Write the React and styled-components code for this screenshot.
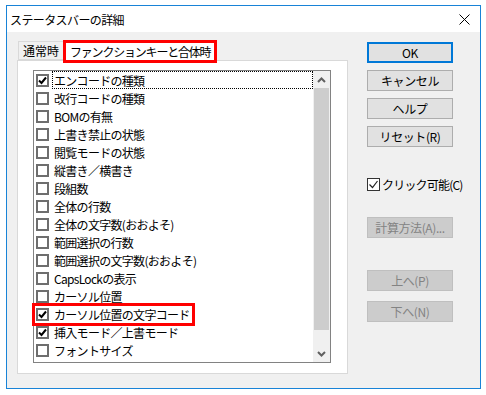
import React from "react";
import styled, { createGlobalStyle } from "styled-components";

const GlobalStyle = createGlobalStyle`
  html, body {
    margin: 0;
    padding: 0;
    background: #ffffff;
  }
  body {
    font-family: "Noto Sans CJK JP", "Noto Sans", sans-serif;
    font-size: 12px;
    color: #000000;
  }
`;

const Page = styled.div`
  padding: 5px 6px;
  width: 486px;
  height: 395px;
  box-sizing: border-box;
`;

const Window = styled.div`
  width: 475px;
  height: 384px;
  box-sizing: border-box;
  border: 1px solid #1883d7;
  display: flex;
  flex-direction: column;
  background: #f0f0f0;
`;

const TitleBar = styled.div`
  height: 26px;
  background: #ffffff;
  display: flex;
  align-items: center;
  justify-content: space-between;
  padding: 0 10px 0 3px;
  font-size: 12px;
  letter-spacing: -0.6px;
`;

const Content = styled.div`
  flex: 1;
  display: flex;
  padding: 6px 26px 0 10px;
  gap: 19px;
`;

const LeftColumn = styled.div`
  display: flex;
  flex-direction: column;
  width: 331px;
`;

const TabStrip = styled.div`
  height: 22px;
  display: flex;
  align-items: flex-end;
  padding-left: 1px;
`;

const Tab = styled.div`
  position: relative;
  height: ${(p) => (p.$active ? "21px" : "19px")};
  box-sizing: border-box;
  padding: 0 ${(p) => (p.$active ? "5px" : "4px")};
  border: 1px solid #d9d9d9;
  border-bottom: ${(p) => (p.$active ? "none" : "1px solid #d9d9d9")};
  background: ${(p) => (p.$active ? "#ffffff" : "#f0f0f0")};
  display: flex;
  align-items: center;
  margin-bottom: ${(p) => (p.$active ? "-1px" : "0")};
  z-index: ${(p) => (p.$active ? 2 : 1)};
  font-size: 12px;
  letter-spacing: ${(p) => (p.$active ? "-1.2px" : "0")};
`;

const RedMark = styled.div`
  position: absolute;
  left: ${(p) => p.$l}px;
  top: ${(p) => p.$t}px;
  right: ${(p) => p.$r}px;
  bottom: ${(p) => p.$b}px;
  border: 3px solid #ff0000;
  pointer-events: none;
  z-index: 5;
`;

const Panel = styled.div`
  flex: none;
  height: 314px;
  box-sizing: border-box;
  background: #ffffff;
  border: 1px solid #d9d9d9;
  padding: 9px 16px 0 15px;
`;

const ListBox = styled.div`
  width: 298px;
  height: 293px;
  box-sizing: border-box;
  border: 1px solid #828282;
  display: flex;
  background: #ffffff;
`;

const Items = styled.div`
  flex: 1;
  display: flex;
  flex-direction: column;
`;

const Item = styled.div`
  position: relative;
  height: 18px;
  display: flex;
  align-items: center;
  padding-left: 2px;
`;

const Label = styled.div`
  flex: 1;
  height: 18px;
  box-sizing: border-box;
  margin-left: 3px;
  padding-left: 1px;
  display: flex;
  align-items: center;
  border: 1px dotted ${(p) => (p.$focus ? "#000000" : "transparent")};
  letter-spacing: -0.7px;
  white-space: nowrap;
`;

const BoxBig = styled.div`
  width: 13px;
  height: 13px;
  box-sizing: border-box;
  border: 2px solid #6e6e6e;
  background: #ffffff;
  display: flex;
  align-items: center;
  justify-content: center;
  flex: none;
`;

const ScrollBar = styled.div`
  width: 17px;
  background: #f0f0f0;
  display: flex;
  flex-direction: column;
`;

const Arrow = styled.div`
  height: 17px;
  display: flex;
  align-items: center;
  justify-content: center;
`;

const Thumb = styled.div`
  height: 242px;
  margin: 0 1px;
  background: #cdcdcd;
`;

const Track = styled.div`
  flex: 1;
`;

const RightColumn = styled.div`
  width: 86px;
  display: flex;
  flex-direction: column;
  padding-top: 4px;
`;

const Button = styled.div`
  height: 21px;
  box-sizing: border-box;
  margin-top: ${(p) => p.$mt || 0}px;
  background: ${(p) => (p.$disabled ? "#cccccc" : "#e1e1e1")};
  border: ${(p) =>
    p.$default
      ? "2px solid #0078d7"
      : p.$disabled
      ? "1px solid #bfbfbf"
      : "1px solid #adadad"};
  color: ${(p) => (p.$disabled ? "#838383" : "#000000")};
  display: flex;
  align-items: center;
  justify-content: center;
  font-size: 12px;
  letter-spacing: -0.4px;
`;

const CheckRow = styled.div`
  margin-top: ${(p) => p.$mt}px;
  display: flex;
  align-items: center;
  gap: 2px;
  height: 14px;
  letter-spacing: -0.8px;
  white-space: nowrap;
`;

const BoxSmall = styled.div`
  width: 13px;
  height: 13px;
  box-sizing: border-box;
  border: 1px solid #333333;
  background: #ffffff;
  display: flex;
  align-items: center;
  justify-content: center;
  flex: none;
`;

const items = [
  ["エンコードの種類", true],
  ["改行コードの種類", false],
  ["BOMの有無", false],
  ["上書き禁止の状態", false],
  ["閲覧モードの状態", false],
  ["縦書き／横書き", false],
  ["段組数", false],
  ["全体の行数", false],
  ["全体の文字数(おおよそ)", false],
  ["範囲選択の行数", false],
  ["範囲選択の文字数(おおよそ)", false],
  ["CapsLockの表示", false],
  ["カーソル位置", false],
  ["カーソル位置の文字コード", true],
  ["挿入モード／上書モード", true],
  ["フォントサイズ", false],
];

function BoldCheck() {
  return (
    <svg width="9" height="9" viewBox="0 0 9 9">
      <path d="M1 4.5 L3.5 7 L8 1.5" fill="none" stroke="#000" strokeWidth="2" />
    </svg>
  );
}

function ThinCheck() {
  return (
    <svg width="11" height="11" viewBox="0 0 11 11">
      <path d="M1.5 5.5 L4.5 8.5 L9.5 2" fill="none" stroke="#222" strokeWidth="1.2" />
    </svg>
  );
}

function Chevron({ down }) {
  return (
    <svg width="9" height="6" viewBox="0 0 9 6">
      <path
        d={down ? "M1 1 L4.5 4.5 L8 1" : "M1 5 L4.5 1.5 L8 5"}
        fill="none"
        stroke="#606060"
        strokeWidth="2"
      />
    </svg>
  );
}

export default function App() {
  return (
    <>
      <GlobalStyle />
      <Page>
        <Window>
          <TitleBar>
            <span>ステータスバーの詳細</span>
            <svg width="11" height="11" viewBox="0 0 11 11">
              <path d="M0.5 0.5 L10.5 10.5 M10.5 0.5 L0.5 10.5" stroke="#000" strokeWidth="1" />
            </svg>
          </TitleBar>
          <Content>
            <LeftColumn>
              <TabStrip>
                <Tab>通常時</Tab>
                <Tab $active>
                  ファンクションキーと合体時
                  <RedMark $l={-2} $t={-1} $r={-2} $b={-2} />
                </Tab>
              </TabStrip>
              <Panel>
                <ListBox>
                  <Items>
                    {items.map(([text, checked], i) => (
                      <Item key={text}>
                        <BoxBig>{checked && <BoldCheck />}</BoxBig>
                        <Label $focus={i === 0}>{text}</Label>
                        {i === 13 && <RedMark $l={-2} $t={-2} $r={118} $b={-3} />}
                      </Item>
                    ))}
                  </Items>
                  <ScrollBar>
                    <Arrow>
                      <Chevron />
                    </Arrow>
                    <Thumb />
                    <Track />
                    <Arrow>
                      <Chevron down />
                    </Arrow>
                  </ScrollBar>
                </ListBox>
              </Panel>
            </LeftColumn>
            <RightColumn>
              <Button $default>OK</Button>
              <Button $mt={7}>キャンセル</Button>
              <Button $mt={7}>ヘルプ</Button>
              <Button $mt={7}>リセット(R)</Button>
              <CheckRow $mt={30}>
                <BoxSmall>
                  <ThinCheck />
                </BoxSmall>
                クリック可能(C)
              </CheckRow>
              <Button $mt={26} $disabled>
                計算方法(A)...
              </Button>
              <Button $mt={32} $disabled>
                上へ(P)
              </Button>
              <Button $mt={10} $disabled>
                下へ(N)
              </Button>
            </RightColumn>
          </Content>
        </Window>
      </Page>
    </>
  );
}
